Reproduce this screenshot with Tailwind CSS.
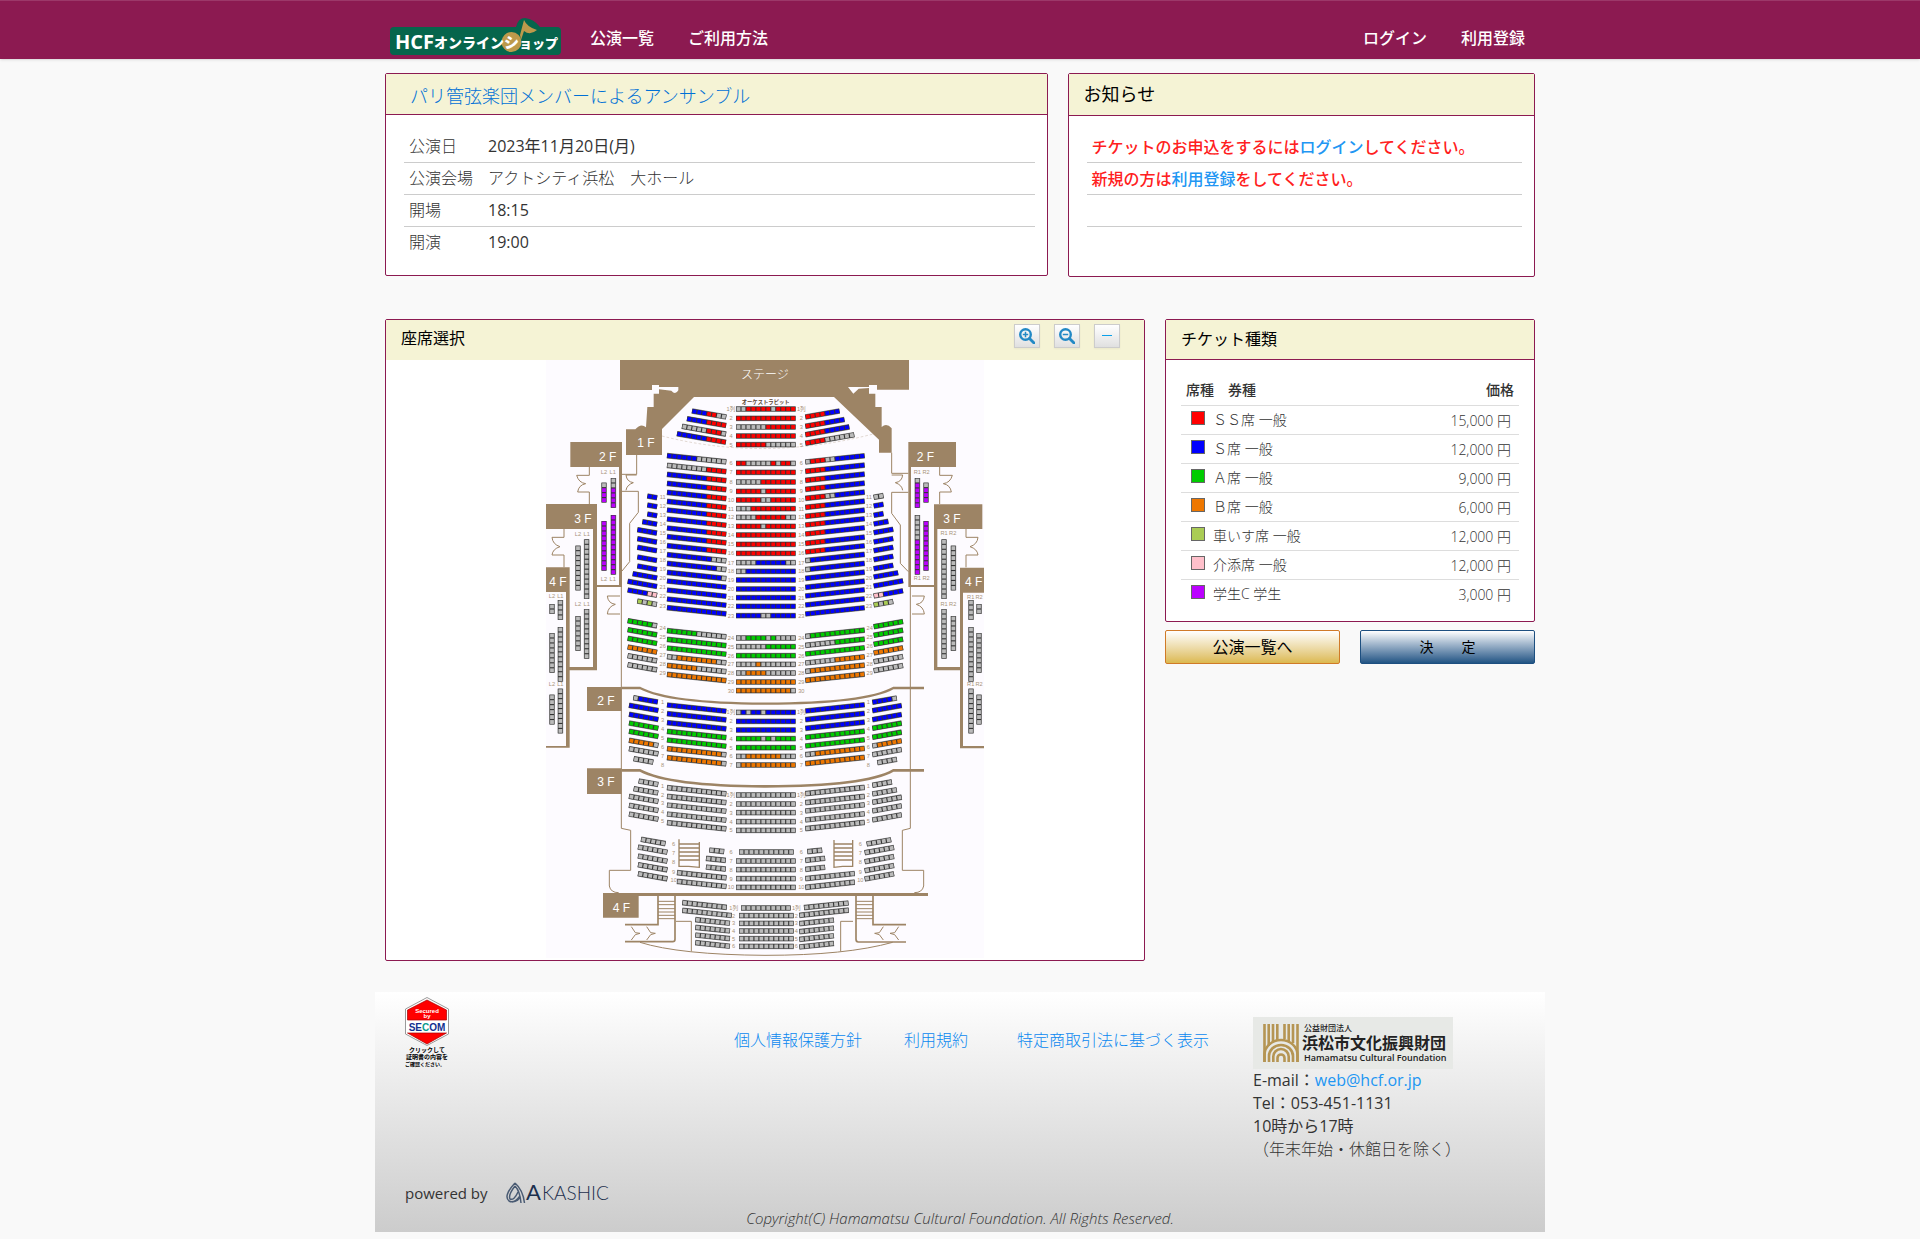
<!DOCTYPE html>
<html lang="ja">
<head>
    <meta charset="UTF-8">
    <meta name="viewport" content="width=device-width, initial-scale=1.0">
    <title>HCFオンラインショップ</title>
    <script src="https://cdn.jsdelivr.net/npm/@tailwindcss/browser@4"></script>
</head>
<body class="bg-[#f9f9f9] font-['Open_Sans','Noto_Sans_CJK_JP',sans-serif] text-base text-[#333]">
    <header class="bg-[#8c1a51] border-t border-[#9c3869] shadow-sm">
        <div class="max-w-[1170px] h-[58px] mx-auto px-[15px] flex items-center text-white font-medium">
            <a href="#" class="self-end mb-[3px]" aria-label="HCFオンラインショップ">
                <svg width="171" height="38" viewBox="0 0 171 38" class="block">
                    <path d="M4 9H126Q128 0 135 0Q144 1 150 9H167Q171 9 171 13V33Q171 37 167 37H4Q0 37 0 33V13Q0 9 4 9Z" fill="#06654c"/>
                    <circle cx="121.500" cy="24" r="10" fill="#bd9a4b"/>
                    <path d="M130 17L134 2Q137 9 147 12Q140 18 134 13L131 22Z" fill="#bd9a4b"/>
                    <g fill="#fff" font-weight="900" font-family="Open Sans, Noto Sans CJK JP, sans-serif">
                        <text x="5" y="31" font-size="20" font-weight="bold">HCF</text>
                        <text x="44" y="30" font-size="14">オンライン</text>
                        <text x="114" y="30" font-size="15">シ</text>
                        <text x="129" y="30" font-size="13">ョップ</text>
                    </g>
                </svg>
            </a>
            <nav class="flex flex-1 pt-4 pl-[29px] pr-[5px]">
                <a href="#" class="mr-[34px]">公演一覧</a>
                <a href="#">ご利用方法</a>
                <a href="#" class="ml-auto mr-[34px]">ログイン</a>
                <a href="#">利用登録</a>
            </nav>
        </div>
    </header>

    <main class="max-w-[1170px] mx-auto">
        <div class="grid grid-cols-12 items-start pt-[14px]">
            <section class="col-span-7 mx-[10px] bg-white border border-[#8c1a51] rounded-xs">
                <h1 class="h-[41px] flex items-center pt-1 pl-6 bg-[#f5f3d5] border-b border-[#8c1a51] text-[18px] font-light text-[#0070d6]">パリ管弦楽団メンバーによるアンサンブル</h1>
                <div class="pt-[15px] pb-[17px] pl-[18px] pr-3">
                    <table class="w-full text-left">
                        <tr class="h-8 border-b border-[#ccc]"><th class="w-20 pl-[5px] font-light">公演日</th><td class="pl-1">2023年11月20日(月)</td></tr>
                        <tr class="h-8 border-b border-[#ccc]"><th class="pl-[5px] font-light">公演会場</th><td class="pl-1 font-light">アクトシティ浜松　大ホール</td></tr>
                        <tr class="h-8 border-b border-[#ccc]"><th class="pl-[5px] font-light">開場</th><td class="pl-1">18:15</td></tr>
                        <tr class="h-8"><th class="pl-[5px] font-light">開演</th><td class="pl-1">19:00</td></tr>
                    </table>
                </div>
            </section>
            <section class="col-span-5 mx-[10px] bg-white border border-[#8c1a51] rounded-xs">
                <h2 class="h-[42px] flex items-center pl-[15px] bg-[#f5f3d5] border-b border-[#8c1a51] text-[18px] text-black">お知らせ</h2>
                <ul class="pt-[15px] pb-[17px] pl-[18px] pr-3 font-medium text-[#ff2020]">
                    <li class="h-8 flex items-center pl-[5px] border-b border-[#ccc]">チケットのお申込をするには<a href="#" class="text-[#2196f3]">ログイン</a>してください。</li>
                    <li class="h-8 flex items-center pl-[5px] border-b border-[#ccc]">新規の方は<a href="#" class="text-[#2196f3]">利用登録</a>をしてください。</li>
                    <li class="h-8 border-b border-[#ccc]"></li>
                    <li class="h-8"></li>
                </ul>
            </section>
        </div>

        <div class="grid grid-cols-12 items-start pt-[42px]">
            <section class="col-span-8 mx-[10px] bg-white border border-[#8c1a51] rounded-xs">
                <div class="h-10 flex items-center pl-[15px] pr-6 pb-1 bg-[#f5f3d5]">
                    <h2 class="text-black mr-auto">座席選択</h2>
                    <div class="flex gap-[14px] mb-1">
                        <button type="button" aria-label="拡大" class="w-[26px] h-6 flex items-center justify-center border border-[#ccc] bg-linear-to-b from-white to-[#e0e0e0] shadow-xs">
                            <svg width="16" height="16" viewBox="0 0 16 16" fill="none" stroke="#2389c5"><circle cx="6.5" cy="6.5" r="5.3" stroke-width="2.4"/><path d="M10.5 10.5L15 15" stroke-width="2.8" stroke-linecap="round"/><path d="M6.500 3.800V9.200M3.800 6.500H9.200" stroke-width="1.500"/></svg>
                        </button>
                        <button type="button" aria-label="縮小" class="w-[26px] h-6 flex items-center justify-center border border-[#ccc] bg-linear-to-b from-white to-[#e0e0e0] shadow-xs">
                            <svg width="16" height="16" viewBox="0 0 16 16" fill="none" stroke="#2389c5"><circle cx="6.5" cy="6.5" r="5.3" stroke-width="2.4"/><path d="M10.5 10.5L15 15" stroke-width="2.8" stroke-linecap="round"/><path d="M3.800 6.500H9.200" stroke-width="1.500"/></svg>
                        </button>
                        <button type="button" aria-label="元に戻す" class="w-[26px] h-6 flex items-center justify-center border border-[#ccc] bg-linear-to-b from-white to-[#e0e0e0] shadow-xs">
                            <svg width="10" height="2" viewBox="0 0 10 2"><path d="M0 .5H10" stroke="#0aa0ea"/></svg>
                        </button>
                    </div>
                </div>
                <svg id="seatMap" viewBox="0 0 1314 1794" class="block w-[438px] max-w-full mx-auto mb-[2px] bg-[#fdfbff]" role="img" aria-label="座席表">
                    <g fill="#9d8465">
                        <path d="M222 0H1089V89H993V75H969V101H988V141H1007V201Q1022 188 1037 205V278H999V239L864 111H444L348 207V285H240V208H268Q285 188 300 202L304 141H323V101H339V75H318V90H222Z"/>
                        <path d="M73 246H228V678H219V321H73ZM0 432H153V931H70V921H141V507H0ZM0 622H71V1163H0V1158H60V696H0ZM153 675H228V681H153Z"/>
                        <path d="M1087 246H1230V321H1095V675H1165V681H1087ZM1164 433H1309V507H1174V921H1243V931H1164ZM1242 623H1314V698H1251V1158H1314V1165H1242Z"/>
                        <path d="M123 981H227V1053H123ZM123 1225H227V1302H123ZM171 1599H1146V1608H278V1673H171Z"/>
                    </g>
                    <path d="M339 81H397V91Q388 107 376 92L339 88ZM969 81H906L922 101L938 86L969 84Z" fill="#fdfbff"/>
                    <g fill="none" stroke="#9d8465" stroke-width="3">
                        <path d="M272 285V343H228M228 394H277V457L251 490V605L228 633M226 680V1405L254 1411V1531H190V1578Q194 1598 218 1598"/>
                        <path d="M1037 278V340H1087M1087 397H1037V460L1063 495V610L1087 635M1093 680V1405L1069 1411V1531H1133V1578Q1129 1598 1105 1598"/>
                        <path d="M130 321V346H92Q98 368 119 371Q98 375 95 396H130V432M54 507V532H18Q20 553 42 560Q20 567 18 585H54V622M272 345H240Q242 365 262 368Q242 375 240 391M222 708H184Q186 730 208 733Q186 740 184 762H222"/>
                        <path d="M1181 321V346H1219Q1213 368 1192 371Q1213 375 1216 396H1181V432M1260 507V532H1296Q1294 553 1272 560Q1294 567 1296 585H1260V622M1037 345H1070Q1068 365 1048 368Q1068 375 1070 391M1098 708H1135Q1133 730 1111 733Q1133 740 1135 762H1098"/>
                        <path d="M348 228Q660 308 997 218" stroke-dasharray="8 6" stroke-width="1.500" opacity=".6"/>
                        <path d="M227 984H282Q370 1030 659 1031Q960 1030 1042 984H1134" stroke-width="7"/>
                        <path d="M227 1231H282Q370 1278 659 1279Q960 1278 1042 1231H1134" stroke-width="8"/>
                        <path d="M399 1438V1519H428L460 1522V1446M399 1452H460M399 1464H460M399 1476H460M399 1488H460M399 1500H460M864 1440V1522L890 1519H920V1440M864 1452H920M864 1464H920M864 1476H920M864 1488H920M864 1500H920" stroke-width="4"/>
                        <path d="M336 1604V1694H237M387 1604V1738Q387 1745 380 1745H237M981 1604V1694H1080M930 1604V1738Q930 1746 937 1746H1080" stroke-width="5"/>
                        <path d="M336 1624H387M336 1634H387M336 1646H387M336 1656H387M336 1666H387M336 1676H387M930 1624H981M930 1634H981M930 1646H981M930 1656H981M930 1666H981M930 1676H981"/>
                        <path d="M390 1684H436V1774M282 1747Q400 1784 657 1786Q900 1786 1040 1747M921 1684H884V1774M256 1700L268 1718L282 1720L268 1724L256 1740M302 1700L314 1718L328 1720L314 1724L302 1740M1058 1700L1046 1718L1032 1720L1046 1724L1058 1740M1012 1700L1000 1718L986 1720L1000 1724L1012 1740"/>
                    </g>
                    <g fill="#fff" font-size="36" font-weight="300" text-anchor="middle" font-family="Liberation Sans, Noto Sans CJK JP, sans-serif">
                        <text x="657" y="58">ステージ</text>
                        <text x="300" y="261">1 F</text>
                        <text x="185" y="304">2 F</text><text x="1138" y="304">2 F</text>
                        <text x="111" y="489">3 F</text><text x="1218" y="489">3 F</text>
                        <text x="36" y="678">4 F</text><text x="1283" y="678">4 F</text>
                        <text x="180" y="1036">2 F</text><text x="180" y="1278">3 F</text><text x="226" y="1655">4 F</text>
                    </g>
                    <text x="659" y="132" font-size="16" font-weight="bold" text-anchor="middle" fill="#5c4630" font-family="Noto Sans CJK JP, sans-serif">オーケストラピット</text>
                </svg>
            </section>

            <div class="col-span-4 mx-[10px]">
                <section class="bg-white border border-[#8c1a51] rounded-xs">
                    <h2 class="h-10 flex items-center pl-[15px] pb-[2px] bg-[#f5f3d5] border-b border-[#8c1a51] text-black">チケット種類</h2>
                    <div class="px-[15px] pt-4 pb-[13px]">
                        <table class="w-full text-sm font-light">
                            <thead>
                                <tr class="h-[29px] font-medium"><th class="text-left pl-[5px] font-medium">席種　券種</th><th class="text-right pr-[5px] font-medium">価格</th></tr>
                            </thead>
                            <tbody id="tickets"></tbody>
                        </table>
                    </div>
                </section>
                <div class="grid grid-cols-2 gap-5 mt-2 text-black">
                    <button type="button" class="h-[34px] border border-[#d07a28] rounded-xs bg-linear-to-b from-white to-[#dcb94e] text-base">公演一覧へ</button>
                    <button type="button" class="h-[34px] border border-[#1d4f80] rounded-xs bg-linear-to-b from-white to-[#215584] text-sm">決　　定</button>
                </div>
            </div>
        </div>
    </main>

    <footer class="max-w-[1170px] mx-auto mt-[31px] mb-2 px-[30px] bg-linear-to-b from-white to-[#ccc]">
        <div class="flex h-[184px]">
            <a href="#" class="mt-[5px]" aria-label="Secured by SECOM">
                <svg width="44" height="72" viewBox="0 0 44 72" font-family="Liberation Sans, Noto Sans CJK JP, sans-serif" text-anchor="middle">
                    <path d="M22 .5L43.500 12V37L22 48.500L.5 37V12Z" fill="#fff" stroke="#999"/>
                    <path d="M22 3L41.500 13V23H2.500V13ZM2.500 36H41.500L22 47Z" fill="#f00" stroke="#a00" stroke-width=".7"/>
                    <text x="22" y="16" font-size="6" font-weight="bold" fill="#fff">Secured</text>
                    <text x="22" y="21" font-size="6" font-weight="bold" fill="#fff">by</text>
                    <text x="22" y="34" font-size="10" font-weight="bold" fill="#12308f">SE<tspan fill="#0a9a8c">C</tspan>OM</text>
                    <g font-size="6" font-weight="bold" fill="#000"><text x="22" y="55">クリックして</text><text x="22" y="62">証明書の内容を</text><text x="0" y="69" font-size="5" text-anchor="start">ご確認ください。</text></g>
                </svg>
            </a>
            <nav class="flex ml-auto pt-9 font-light text-[#0a88f0]">
                <a href="#" class="mr-[42px]">個人情報保護方針</a>
                <a href="#" class="mr-[49px]">利用規約</a>
                <a href="#" class="mr-11">特定商取引法に基づく表示</a>
            </nav>
            <div class="w-[262px] pt-[25px] leading-[23px]">
                <svg width="200" height="52" viewBox="0 0 200 52" class="block" font-family="Noto Sans CJK JP, sans-serif" fill="#222">
                    <rect width="200" height="52" fill="#e7e9e6"/>
                    <g fill="none" stroke="#b59553" stroke-width="2.600">
                        <path d="M11.500 7V45M15.700 7V29M20 7V25M24.300 7V23M31.500 7V22M35.700 7V24M40 7V26M44.500 7V45"/>
                        <path d="M11.500 45V38A16.500 15 0 0 1 44.500 38V45M16 45V39A12 11 0 0 1 40 39V45M20.300 45V39.500A7.700 7.500 0 0 1 35.700 39.500V45M24.500 45V41A3.500 3.500 0 0 1 31.500 41V45"/>
                    </g>
                    <text x="51" y="14" font-size="8" font-weight="500">公益財団法人</text>
                    <text x="49" y="32" font-size="16" font-weight="bold">浜松市文化振興財団</text>
                    <text x="51" y="44" font-size="9" font-weight="600" font-family="Open Sans, sans-serif">Hamamatsu Cultural Foundation</text>
                </svg>
                <p>E-mail：<a href="#" class="text-[#2196f3]">web@hcf.or.jp</a></p>
                <p>Tel：053-451-1131</p>
                <p>10時から17時</p>
                <p class="font-light">（年末年始・休館日を除く）</p>
            </div>
        </div>
        <div class="flex items-center h-[34px] gap-[18px]">
            <span class="text-[15px]">powered by</span>
            <svg width="114" height="22" viewBox="0 0 114 22" aria-label="AKASHIC">
                <path d="M9 1Q17 8 18.500 21M9 1Q-3 14 3 19Q8 22 14 14M9 4Q2 13 4 17Q8 19 12 10M9 4Q14 9 15 21M6 20Q13 19 14 14" fill="none" stroke="#4a5b73" stroke-width="1.500"/>
                <g fill="#1c2f4d" font-family="Lato, sans-serif"><text x="20" y="18" font-size="22">A</text><text x="36" y="18" font-size="19" font-weight="300">KASHIC</text></g>
            </svg>
        </div>
        <p class="h-[22px] text-center text-[15px] font-light italic leading-4">Copyright(C) Hamamatsu Cultural Foundation. All Rights Reserved.</p>
    </footer>

    <script>
        const tickets = [
            ['#ff0000', 'ＳＳ席 一般', '15,000'],
            ['#0000ff', 'Ｓ席 一般', '12,000'],
            ['#00cc00', 'Ａ席 一般', '9,000'],
            ['#ee7700', 'Ｂ席 一般', '6,000'],
            ['#aacc55', '車いす席 一般', '12,000'],
            ['#ffc0cb', '介添席 一般', '12,000'],
            ['#bb00ff', '学生C 学生', '3,000']
        ];
        document.getElementById('tickets').innerHTML = tickets.map(([color, name, price]) => `
            <tr class="h-[29px] border-t border-[#ddd]">
                <td class="pl-[10px]"><span class="inline-block size-[14px] mr-2 border border-[#666]" style="background:${color}"></span>${name}</td>
                <td class="text-right pr-2 pt-[2px]">${price} 円</td>
            </tr>`).join('');

        // seat colours, one letter per seat; x is a seat that is not on sale
        const colors = { r: '#f00', b: '#00f', g: '#0c0', o: '#e70', l: '#ac5', p: '#ffc0cb', v: '#b0f', x: '#bbb' };
        const pitch = 14.9;
        const map = document.getElementById('seatMap');
        let out = '';

        function row(x, y, angle, seats) {
            const w = seats.length * pitch;
            out += `<g transform="translate(${x} ${y}) rotate(${angle})"><rect y="-8.5" width="${w}" height="17" fill="#888"/><rect y="-7" width="${w}" height="14" fill="#333"/>`;
            [...seats].forEach((s, i) => {
                out += `<rect x="${(i * pitch + 1.7).toFixed(1)}" y="-5.7" width="11.6" height="11.4" fill="${colors[s]}"/>`;
            });
            out += '</g>';
        }
        const rows = (x, angle, list) => list.forEach(([y, seats, dx = 0]) => row(x + dx, y, angle, seats));
        const n = (s, count) => s.repeat(count);
        const r12 = n('r', 12), b12 = n('b', 12), g12 = n('g', 12), o12 = n('o', 12), x12 = n('x', 12);
        const rb = 'rrrrbbbbbbbb', br = 'bbbbbbbbrrrr';

        // centre block
        rows(570, 0, [
            [147, 'xxrrrrrxrrrr'], [175, r12], [201, 'xxxxxxrrrrrr'], [228, r12], [254, 'rrrrrrxxxxxx'],
            [310, 'rrxxxxxrxrrx'], [337, r12], [366, 'xxxxxrrrrrrr'], [394, 'rrrrrxrrrrrr'], [420, 'rrrrrxxrrrrr'],
            [446, 'xxxrrrrrrrrr'], [472, 'xxxxrrrrrrxx'], [499, 'rrrrrxrrrrrr'], [525, r12], [553, r12], [580, r12],
            [608, 'xxxxbbbbbbxx'], [634, 'xxbbbbbbbbbb'], [660, b12], [687, b12], [713, b12], [739, b12], [767, 'bbbbbxxbbbbb'],
            [834, 'xxggggxgxxxx'], [860, 'xxxxxxgggggg'], [887, g12], [913, 'xxxxoxxxxxxx'], [939, 'xxooooxxxxxx'], [966, o12], [992, 'ooooooooooox'],
            [1057, 'xbxbbxbbbbbb'], [1084, b12], [1110, b12], [1136, 'gggggxgxgggg'], [1163, g12], [1189, 'xxoooooooxxx'], [1215, 'xooooooooooo'],
            [1305, x12], [1332, x12], [1358, x12], [1385, x12], [1411, x12],
            [1476, n('x', 11), 9], [1503, x12], [1529, x12], [1556, x12], [1582, x12],
            [1644, n('x', 10), 15], [1667, n('x', 11), 9], [1690, n('x', 11), 9], [1713, n('x', 11), 9], [1736, n('x', 11), 9], [1759, n('x', 11), 9]
        ]);
        // inner left block
        rows(363, 10, [[153, 'bbbrrxx', 75], [176, 'bbbbrrrr', 60], [199, 'xxxxxrrrx', 45], [221, 'bbbbbbrrrr', 30]]);
        rows(363, 6, [
            [287, 'bbbbbbxxxxxx'], [316, 'xxxxxxxxrrrr'], [343, br], [370, br], [397, br], [424, br], [450, br], [477, br], [504, br], [530, br], [557, br],
            [584, 'bbbbbbbbbxxx'], [610, 'bbbbbbbbbbxx'], [637, 'bbbbbbbbbbbx'], [663, b12], [690, b12], [717, b12], [743, b12],
            [812, 'ggggggxxxxxx'], [838, g12], [864, g12], [890, 'xxooooooooxx'], [916, 'ooooooxxxxxx'], [943, o12],
            [1035, b12], [1061, b12], [1088, b12], [1114, g12], [1140, g12], [1166, 'ooooooooooox'], [1193, 'ooooooooooox'],
            [1283, x12], [1309, x12], [1335, x12], [1362, x12], [1388, x12],
            [1470, 'xxx', 127], [1495, 'xxxx', 117], [1521, 'xxxx', 117], [1538, n('x', 10), 30], [1564, n('x', 10), 30],
            [1628, n('x', 9), 46], [1651, n('x', 10), 46], [1679, n('x', 7), 85], [1702, n('x', 7), 85], [1725, n('x', 7), 85], [1748, n('x', 7), 85]
        ]);
        // inner right block
        rows(778, -10, [[171, 'rrrrbbb'], [199, 'rrrrbbbb'], [224, 'rrrrbbbbb'], [250, 'rrrrxxxxxx']]);
        rows(778, -6, [
            [306, 'xrrrxxbbbbbb'], [334, rb], [361, rb], [388, rb], [415, 'rrrrxxbbbbbb'], [442, rb], [469, rb], [495, rb], [522, rb], [550, rb], [576, rb],
            [602, 'xbbbbbbbbbbb'], [629, 'xbbbbbbbbbbb'], [655, b12], [682, b12], [708, b12], [735, b12], [762, b12],
            [829, 'xggggggggggg'], [856, 'xxxxxxgggggg'], [882, g12], [909, 'xxxxxxoooooo'], [934, 'xooooooooooo'], [961, o12],
            [1053, b12], [1079, b12], [1105, b12], [1132, g12], [1158, g12], [1184, 'xxoooooooooo'], [1211, o12],
            [1301, x12], [1328, x12], [1353, x12], [1380, x12], [1406, x12],
            [1475, 'xxx', 6], [1501, 'xxxx'], [1528, 'xxxx'], [1556, n('x', 10)], [1582, n('x', 10)],
            [1643, n('x', 9), -4], [1666, n('x', 10), -18], [1691, n('x', 7), -18], [1715, n('x', 7), -18], [1738, n('x', 7), -18], [1761, n('x', 7), -18]
        ]);
        // outer left wing
        rows(245, 10, [
            [408, 'bb', 59], [435, 'bb', 59], [462, 'bb', 59], [485, 'bbb', 44], [509, 'bbbb', 29], [536, 'bbbb', 29], [562, 'bbbb', 29], [591, 'bbbb', 29], [618, 'bbbb', 29],
            [641, 'bbbbb', 15], [664, 'bbbbbb'], [690, 'bbbbpp'], [723, 'lxlx', 29],
            [782, 'gggggx'], [809, 'gggggg'], [835, 'gggggg'], [861, 'oooooo'], [887, 'xxxxxx'], [914, 'xxxxxx'],
            [1013, 'xbbbb', 17], [1036, 'bbbbbb', 4], [1063, 'bbbbbb', 4], [1089, 'gggggg', 4], [1114, 'gggggg', 4], [1141, 'ooooox', 4], [1166, 'xxxxxx', 4], [1196, 'xxxx', 18],
            [1263, 'xxxx', 33], [1286, 'xxxxx', 18], [1309, 'xxxxxx', 4], [1336, 'xxxxxx', 4], [1362, 'xxxxxx', 4],
            [1438, 'xxxxx', 40], [1461, 'xxxxxx', 31], [1488, 'xxxxxx', 31], [1514, 'xxxxxx', 31], [1541, 'xxxxxx', 31]
        ]);
        // outer right wing
        rows(983, -10, [
            [412, 'xx'], [438, 'bb'], [466, 'bb'], [492, 'bbb'], [518, 'bbbb'], [546, 'bbbb'], [572, 'bbbb'], [599, 'bbbb'], [626, 'bbbb'],
            [651, 'bbbbb'], [678, 'bbbbbb'], [708, 'ppbbbb'], [735, 'lxlx'],
            [800, 'gggggg'], [826, 'gggggg'], [853, 'gggggg'], [879, 'oooooo'], [905, 'xxxxxx'], [932, 'xxxxxx'],
            [1027, 'bbbbx', -4], [1052, 'bbbbbb', -4], [1079, 'bbbbbb', -4], [1105, 'gggggg', -4], [1132, 'gggggg', -4], [1158, 'xooooo', -4], [1184, 'xxxxxx', -4], [1208, 'xxxx', 11],
            [1276, 'xxxx', -4], [1302, 'xxxxx', -4], [1327, 'xxxxxx', -4], [1353, 'xxxxxx', -4], [1380, 'xxxxxx', -4],
            [1452, 'xxxxx', -21], [1478, 'xxxxxx', -27], [1505, 'xxxxxx', -27], [1532, 'xxxxxx', -27], [1557, 'xxxxxx', -27]
        ]);
        // balcony seats along the side walls: x, top, seats
        [
            [174, 368, 'xvvv'], [174, 483, n('v', 10)], [202, 354, 'xxvvvv'], [202, 465, n('v', 12)],
            [96, 557, n('x', 9)], [96, 768, n('x', 7)], [122, 538, x12], [122, 747, n('x', 10)],
            [18, 732, 'xx'], [18, 819, n('x', 8)], [18, 1004, n('x', 6)], [43, 720, 'xxxx'], [43, 801, n('x', 11)], [43, 986, n('x', 9)],
            [1114, 354, 'xvvvvv'], [1114, 465, 'xxxxxvvvvvvv'], [1140, 368, 'xvvv'], [1140, 483, n('v', 10)],
            [1194, 538, x12], [1194, 747, n('x', 10)], [1222, 557, n('x', 9)], [1222, 768, n('x', 7)],
            [1275, 720, 'xxxx'], [1275, 801, n('x', 11)], [1275, 986, n('x', 9)], [1299, 732, 'xx'], [1299, 819, n('x', 8)], [1299, 1004, n('x', 6)]
        ].forEach(([x, y, seats]) => row(x, y, 90, seats));

        // row numbers
        const label = (x, y, t) => out += `<text x="${x}" y="${y + 6}">${t}</text>`;
        const both = (x1, x2, first, ys) => ys.forEach((y, i) => {
            const t = first + i === 1 ? '1列' : first + i;
            label(x1, y, t);
            label(x2, y, t);
        });
        out += '<g fill="#a8937a" font-size="17" text-anchor="middle" font-family="Liberation Sans, Noto Sans CJK JP, sans-serif">';
        both(555, 766, 1, [147, 175, 201, 228, 254, 310, 337, 366, 394, 420, 446, 472, 499, 525, 553, 580, 608, 634, 660, 687, 713, 739, 767, 834, 860, 887, 913, 939, 966, 992]);
        both(555, 766, 1, [1057, 1084, 1110, 1136, 1163, 1189, 1215]);
        both(555, 766, 1, [1305, 1332, 1358, 1385, 1411, 1476, 1503, 1529, 1556, 1582]);
        both(563, 751, 1, [1644, 1667, 1690, 1713, 1736, 1759]);
        both(350, 969, 11, [412, 439, 466, 493, 519, 547, 574, 601, 628, 655, 681, 709, 737]);
        both(350, 971, 24, [804, 831, 858, 885, 911, 938]);
        both(350, 967, 2, [1054, 1081, 1108, 1135, 1162, 1189, 1216]);
        both(350, 967, 2, [1304, 1330, 1357, 1383]);
        both(383, 943, 6, [1453, 1480, 1507, 1535, 1561]);
        [[350, 1026], [967, 1026], [350, 1277], [967, 1277]].forEach(([x, y]) => label(x, y, 1));
        [[174, 335, 'L2'], [200, 335, 'L1'], [174, 658, 'L2'], [200, 658, 'L1'], [96, 521, 'L2'], [122, 521, 'L1'], [96, 731, 'L2'], [122, 731, 'L1'],
         [18, 708, 'L2'], [43, 708, 'L1'], [18, 972, 'L2'], [43, 972, 'L1'], [1114, 335, 'R1'], [1140, 335, 'R2'], [1114, 655, 'R1'], [1140, 655, 'R2'],
         [1194, 519, 'R1'], [1220, 519, 'R2'], [1194, 731, 'R1'], [1220, 731, 'R2'], [1274, 710, 'R1'], [1299, 710, 'R2'], [1274, 972, 'R1'], [1299, 972, 'R2']
        ].forEach(([x, y, t]) => label(x, y, t));
        out += '</g>';
        map.insertAdjacentHTML('beforeend', out);
    </script>
</body>
</html>
